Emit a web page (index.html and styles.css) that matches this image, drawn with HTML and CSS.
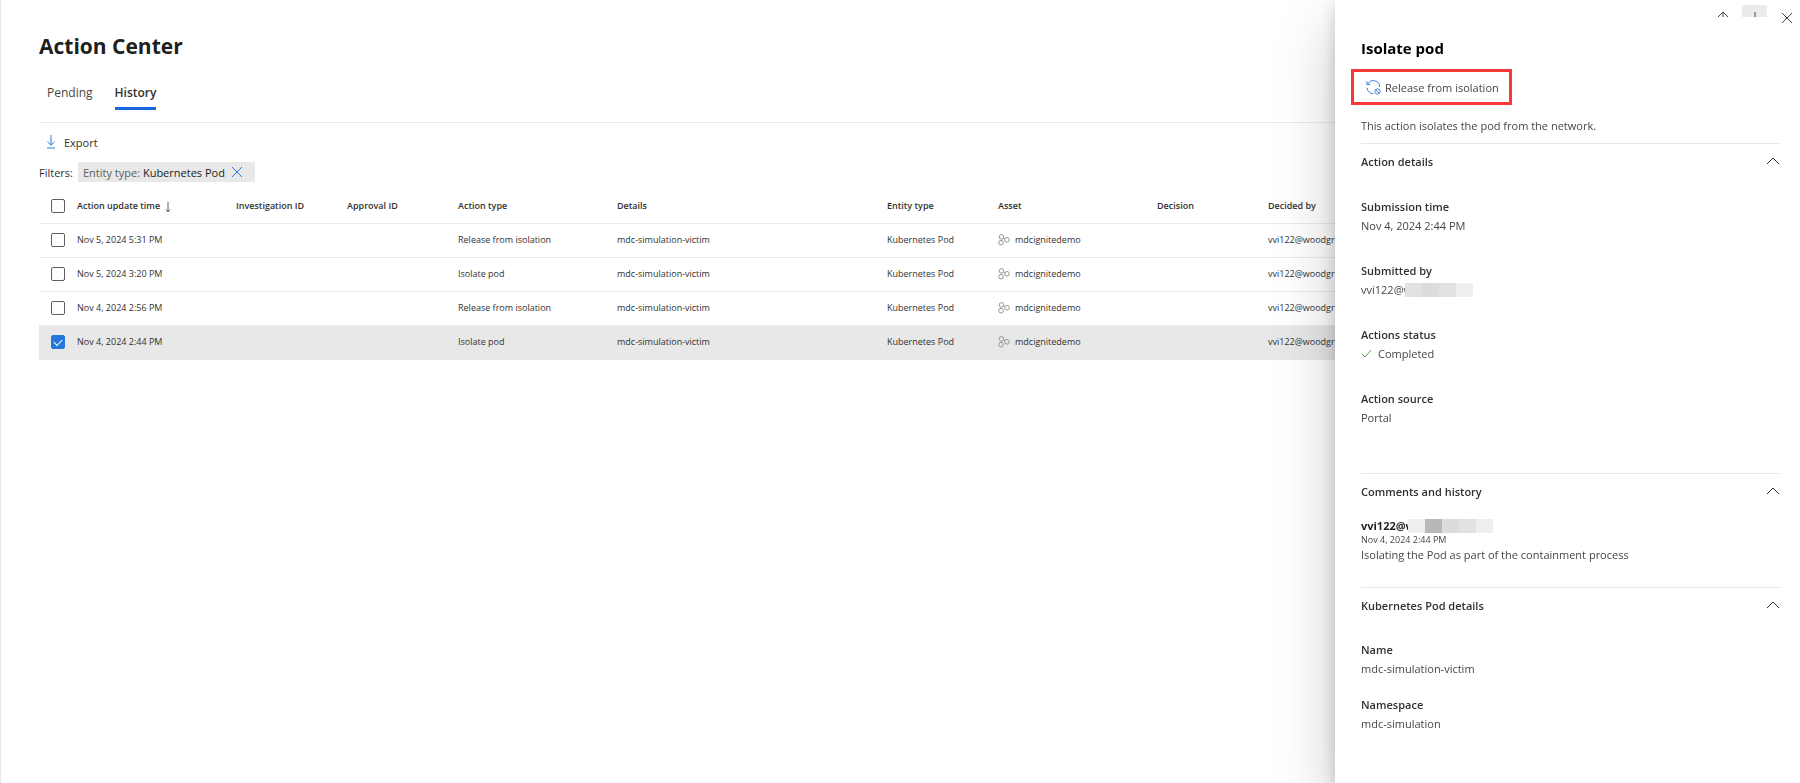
FILE: index.html
```html
<!DOCTYPE html>
<html lang="en">
<head>
  <meta charset="utf-8">
  <title>Action Center</title>
  <link rel="stylesheet" href="styles.css">
</head>
<body>
  <!-- shared icons -->
  <svg class="sprite" aria-hidden="true">
    <symbol id="icon-cluster" viewBox="0 0 12 12">
      <circle cx="3.5" cy="2.9" r="2.3"/>
      <circle cx="3" cy="8.700" r="2.300"/>
      <circle cx="9" cy="5.800" r="2.300"/>
      <path d="M5.700 4l1.100.8"/>
    </symbol>
    <symbol id="icon-chevron" viewBox="0 0 14 8">
      <path d="M1 7l6-6 6 6"/>
    </symbol>
  </svg>

  <main class="page">
    <h1>Action Center</h1>

    <nav class="tabs">
      <a href="#pending" class="tab">Pending</a>
      <a href="#history" class="tab active">History</a>
    </nav>

    <div class="commands">
      <button class="export">
        <svg class="export-icon" viewBox="0 0 10 14"><path d="M5 0v10M1.5 6.8L5 10.2l3.500-3.400M1 13h8"/></svg>
        Export
      </button>
    </div>

    <div class="filters">
      <span>Filters:</span>
      <div class="chip">
        <span class="chip-text">Entity type: <b>Kubernetes Pod</b></span>
        <button class="chip-close" aria-label="Remove filter">
          <svg viewBox="0 0 12 12"><path d="M1 1l10 10M11 1L1 11"/></svg>
        </button>
      </div>
    </div>

    <table class="actions">
      <colgroup>
        <col class="col-check">
        <col class="col-wide">
        <col class="col-small">
        <col class="col-small">
        <col class="col-wide">
        <col class="col-details">
        <col class="col-small">
        <col class="col-wide">
        <col class="col-small">
        <col>
      </colgroup>
      <thead>
        <tr>
          <th><input type="checkbox" aria-label="Select all"></th>
          <th>Action update time <svg class="sort" viewBox="0 0 6 12"><path d="M3 1v10M1 8.500l2 2.500 2-2.500"/></svg></th>
          <th>Investigation ID</th>
          <th>Approval ID</th>
          <th>Action type</th>
          <th>Details</th>
          <th>Entity type</th>
          <th>Asset</th>
          <th>Decision</th>
          <th>Decided by</th>
        </tr>
      </thead>
      <tbody>
        <tr>
          <td><input type="checkbox" aria-label="Select row"></td>
          <td>Nov 5, 2024 5:31 PM</td>
          <td></td>
          <td></td>
          <td>Release from isolation</td>
          <td>mdc-simulation-victim</td>
          <td>Kubernetes Pod</td>
          <td><span class="asset"><svg><use href="#icon-cluster"/></svg>mdcignitedemo</span></td>
          <td></td>
          <td>vvi122@woodgrove</td>
        </tr>
        <tr>
          <td><input type="checkbox" aria-label="Select row"></td>
          <td>Nov 5, 2024 3:20 PM</td>
          <td></td>
          <td></td>
          <td>Isolate pod</td>
          <td>mdc-simulation-victim</td>
          <td>Kubernetes Pod</td>
          <td><span class="asset"><svg><use href="#icon-cluster"/></svg>mdcignitedemo</span></td>
          <td></td>
          <td>vvi122@woodgrove</td>
        </tr>
        <tr>
          <td><input type="checkbox" aria-label="Select row"></td>
          <td>Nov 4, 2024 2:56 PM</td>
          <td></td>
          <td></td>
          <td>Release from isolation</td>
          <td>mdc-simulation-victim</td>
          <td>Kubernetes Pod</td>
          <td><span class="asset"><svg><use href="#icon-cluster"/></svg>mdcignitedemo</span></td>
          <td></td>
          <td>vvi122@woodgrove</td>
        </tr>
        <tr class="selected">
          <td><input type="checkbox" aria-label="Select row" checked></td>
          <td>Nov 4, 2024 2:44 PM</td>
          <td></td>
          <td></td>
          <td>Isolate pod</td>
          <td>mdc-simulation-victim</td>
          <td>Kubernetes Pod</td>
          <td><span class="asset"><svg><use href="#icon-cluster"/></svg>mdcignitedemo</span></td>
          <td></td>
          <td>vvi122@woodgrove</td>
        </tr>
      </tbody>
    </table>
  </main>

  <aside class="panel">
    <div class="toolbar">
      <div class="pager">
        <button aria-label="Previous"><svg viewBox="0 0 14 14"><path d="M7 1v13M1 7l6-6 6 6"/></svg></button>
        <button class="hover" aria-label="Next"><svg viewBox="0 0 14 14"><path d="M7 1v13M1 8l6 6 6-6"/></svg></button>
      </div>
      <button class="close" aria-label="Close"><svg viewBox="0 0 14 14"><path d="M2 2l10 10M12 2L2 12"/></svg></button>
    </div>

    <div class="panel-content">
      <h2>Isolate pod</h2>

      <button class="release">
        <svg viewBox="0 0 16 16">
          <path d="M1.800 4.600A6.700 6.700 0 0 1 14.600 7.400M1 1.300v3.600h3.600M1.200 8.500A6.700 6.700 0 0 0 8 14.700"/>
          <circle cx="12.200" cy="12.200" r="2.800"/>
          <path d="M10.300 10.300l3.800 3.800"/>
        </svg>
        Release from isolation
      </button>

      <p class="description">This action isolates the pod from the network.</p>

      <section>
        <button class="section-head">Action details <svg><use href="#icon-chevron"/></svg></button>
        <dl class="fields">
          <div>
            <dt>Submission time</dt>
            <dd>Nov 4, 2024 2:44 PM</dd>
          </div>
          <div>
            <dt>Submitted by</dt>
            <dd>vvi122@w<span class="mask"><i class="m2"></i><i class="m3"></i><i class="m2"></i><i class="m1"></i></span></dd>
          </div>
          <div>
            <dt>Actions status</dt>
            <dd><svg class="done" viewBox="0 0 11 9"><path d="M1 5l3 3 6-7"/></svg>Completed</dd>
          </div>
          <div>
            <dt>Action source</dt>
            <dd>Portal</dd>
          </div>
        </dl>
      </section>

      <section>
        <button class="section-head">Comments and history <svg><use href="#icon-chevron"/></svg></button>
        <div class="comment">
          <div class="author">vvi122@w<span class="mask"><i class="m1"></i><i class="m4"></i><i class="m3"></i><i class="m2"></i><i class="m1"></i></span></div>
          <time>Nov 4, 2024 2:44 PM</time>
          <p>Isolating the Pod as part of the containment process</p>
        </div>
      </section>

      <section>
        <button class="section-head">Kubernetes Pod details <svg><use href="#icon-chevron"/></svg></button>
        <dl class="fields compact">
          <div>
            <dt>Name</dt>
            <dd>mdc-simulation-victim</dd>
          </div>
          <div>
            <dt>Namespace</dt>
            <dd>mdc-simulation</dd>
          </div>
        </dl>
      </section>
    </div>
  </aside>
</body>
</html>
```
FILE: styles.css
```css
* {
  box-sizing: border-box;
}

body {
  margin: 0;
  background: #fff;
  color: #323130;
  font-family: "Open Sans", sans-serif;
  font-size: 11px;
  overflow: hidden;
}

h1, h2, p, dl, dd {
  margin: 0;
}

button {
  border: none;
  background: none;
  padding: 0;
  font: inherit;
  color: inherit;
  cursor: pointer;
}

svg {
  fill: none;
  stroke: currentColor;
}

.sprite {
  display: none;
}

.page {
  min-height: 100vh;
  padding: 30px 0 0 38px;
  border-left: 1px solid #e8e8e8;
}

h1 {
  font-size: 21px;
  line-height: 32px;
  font-weight: 700;
  color: #201f1e;
}

.tabs {
  display: flex;
  gap: 22px;
  padding: 21px 8px 12px;
  border-bottom: 1px solid #ebebeb;
}

.tab {
  color: #484644;
  font-size: 12px;
  line-height: 20px;
  padding-bottom: 4px;
  border-bottom: 3px solid transparent;
  text-decoration: none;
}

.tab.active {
  font-weight: 600;
  color: #323130;
  border-color: #1768d8;
}

.commands {
  padding: 8px 7px 9px;
}

.export {
  display: flex;
  align-items: center;
  gap: 8px;
  height: 22px;
}

.export-icon {
  width: 10px;
  height: 14px;
  stroke: #2f7ad9;
}

.filters {
  display: flex;
  align-items: center;
  gap: 5px;
}

.chip {
  display: flex;
  align-items: center;
  gap: 6px;
  height: 20px;
  padding: 0 12px 0 5px;
  background: #e8e8e8;
  color: #605e5c;
}

.chip b {
  font-weight: 400;
  color: #201f1e;
}

.chip-close {
  display: flex;
  color: #2f7ad9;
}

.chip-close svg {
  width: 12px;
  height: 12px;
}

/* actions table */
.actions {
  width: 100%;
  margin-top: 7px;
  table-layout: fixed;
  border-collapse: collapse;
  font-size: 9px;
}

.col-check {
  width: 38px;
}

.col-small {
  width: 111px;
}

.col-wide {
  width: 159px;
}

.col-details {
  width: 270px;
}

.actions th,
.actions td {
  height: 34px;
  padding: 0;
  border-bottom: 1px solid #ebebeb;
  text-align: left;
  white-space: nowrap;
}

.actions th {
  font-weight: 600;
}

.actions td {
  padding-bottom: 1px;
}

.actions input {
  appearance: none;
  display: block;
  width: 14px;
  height: 14px;
  margin: 0 0 0 12px;
  border: 1px solid #605e5c;
  border-radius: 2px;
  background: #fff;
}

.actions input:checked {
  border-color: #2478dc;
  background: #2478dc;
}

.actions input:checked::before {
  content: "";
  display: block;
  width: 7px;
  height: 4px;
  margin: 3px auto;
  border: solid #fff;
  border-width: 0 0 1px 1px;
  transform: rotate(-45deg);
}

.actions .selected {
  background: #e8e8e8;
}

.sort {
  width: 6px;
  height: 12px;
  margin-left: 3px;
  vertical-align: middle;
  stroke: #605e5c;
}

.asset {
  display: flex;
  align-items: center;
  gap: 5px;
}

.asset svg {
  width: 12px;
  height: 12px;
  stroke: #979593;
}

/* details flyout */
.panel {
  position: fixed;
  top: 0;
  right: 0;
  bottom: 0;
  width: 465px;
  background: #fff;
  box-shadow: 0 26px 58px rgba(0, 0, 0, 0.22), 0 5px 14px rgba(0, 0, 0, 0.18);
  color: #484644;
}

.toolbar {
  display: flex;
  justify-content: flex-end;
  gap: 7px;
  padding: 5px 1px 0 0;
}

.toolbar button {
  display: flex;
  align-items: center;
  justify-content: center;
  width: 25px;
  height: 25px;
}

.toolbar svg {
  width: 14px;
  height: 14px;
  flex-shrink: 0;
}

.pager {
  display: flex;
  gap: 7px;
  height: 12px;
  overflow: hidden;
}

.pager .hover {
  background: #ebebeb;
  border-radius: 2px;
}

.panel-content {
  padding: 6px 20px 0 26px;
}

h2 {
  font-size: 15px;
  line-height: 24px;
  font-weight: 700;
  color: #000;
}

.release {
  display: flex;
  align-items: center;
  gap: 4px;
  height: 36px;
  margin: 9px 0 0 -10px;
  padding: 0 10px 0 12px;
  border: 3px solid #fc3737;
}

.release svg {
  width: 15px;
  height: 15px;
  stroke: #2f7ad9;
}

.description {
  margin: 11px 0 7px;
  line-height: 20px;
}

section {
  border-top: 1px solid #e8e8e8;
}

.section-head {
  display: flex;
  align-items: center;
  justify-content: space-between;
  width: 100%;
  height: 34px;
  font-weight: 600;
  color: #323130;
}

.section-head svg {
  width: 14px;
  height: 8px;
}

.fields {
  display: flex;
  flex-direction: column;
  gap: 26px;
  padding: 19px 0 46px;
  line-height: 19px;
}

.fields.compact {
  gap: 17px;
  padding-top: 18px;
}

.fields dt {
  font-weight: 600;
  color: #323130;
}

.fields dd {
  display: flex;
  align-items: center;
}

.done {
  width: 11px;
  height: 9px;
  margin-right: 6px;
  stroke: #57a64a;
}

.comment {
  padding: 11px 0 24px;
  line-height: 16px;
}

.author {
  display: flex;
  align-items: center;
  height: 14px;
  font-weight: 700;
  color: #201f1e;
}

.comment time {
  display: block;
  font-size: 9px;
  line-height: 14px;
}

/* blocks that hide the rest of an address */
.mask {
  display: flex;
  height: 14px;
  margin-left: -7px;
}

.mask i {
  width: 17px;
}

.m1 {
  background: #eee;
}

.m2 {
  background: #e2e2e2;
}

.m3 {
  background: #dcdcdc;
}

.m4 {
  background: #b8b8b8;
}
```
